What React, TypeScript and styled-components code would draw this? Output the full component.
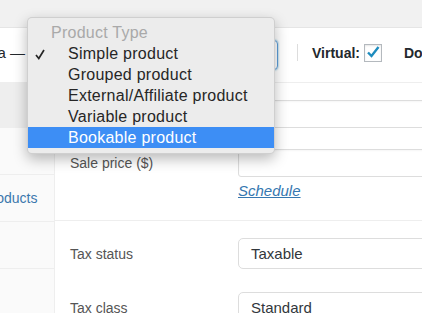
import React, { ReactElement } from 'react';
import styled, { createGlobalStyle } from 'styled-components';

interface TabProps {
  first?: boolean;
  active?: boolean;
}
interface MenuItemProps {
  selected?: boolean;
}

const tabs = ['General', 'Inventory', 'Linked Products', 'Attributes', 'Advanced'];
const productTypes = ['Simple product', 'Grouped product', 'External/Affiliate product', 'Variable product', 'Bookable product'];

const GlobalStyle = createGlobalStyle`
  body {
    margin: 0;
    background: #f1f1f1;
    font-family: "Liberation Sans", Arial, sans-serif;
  }
`;

const Page = styled.div`
  background: #f1f1f1;
  height: 313px;
  overflow: hidden;
  position: relative;
  width: 422px;
`;
const TopBand = styled.div`
  height: 27px;
`;
const Panel = styled.div`
  background: #fff;
  border-top: 1px solid #e5e5e5;
`;
const PanelHeader = styled.div`
  align-items: center;
  border-bottom: 1px solid #eee;
  box-sizing: border-box;
  display: flex;
  height: 55px;
  padding-bottom: 5px;
`;
const Title = styled.div`
  color: #23282d;
  display: flex;
  flex: 0 0 25px;
  font-size: 15px;
  justify-content: flex-end;
  min-width: 0;
  white-space: nowrap;
`;
const TitleText = styled.span`
  flex: none;
`;
const TypeSelect = styled.div`
  align-items: center;
  border: 1px solid #5b9dd9;
  border-radius: 4px;
  box-shadow: 0 0 2px rgba(30, 140, 190, 0.8);
  box-sizing: border-box;
  color: #32373c;
  display: flex;
  flex: none;
  font-size: 14px;
  height: 30px;
  justify-content: space-between;
  margin: 4px 0 0 10px;
  padding: 0 3px 0 8px;
  width: 243px;
`;
const Divider = styled.div`
  background: #ddd;
  flex: none;
  height: 17px;
  margin-left: 19px;
  width: 1px;
`;
const CheckLabel = styled.span<{ gap: number }>`
  color: #23282d;
  flex: none;
  font-size: 14px;
  font-weight: 700;
  margin-left: ${ p => p.gap }px;
  white-space: nowrap;
`;
const Checkbox = styled.div`
  background: #fff;
  border: 1px solid #b4b9be;
  box-shadow: inset 0 1px 2px rgba(0, 0, 0, 0.1);
  box-sizing: border-box;
  flex: none;
  height: 18px;
  margin-left: 4px;
  position: relative;
  width: 18px;
`;
const Body = styled.div`
  display: flex;
  height: 230px;
`;
const Tabs = styled.div`
  background: #fafafa;
  border-right: 1px solid #eee;
  box-sizing: border-box;
  flex: none;
  width: 55px;
`;
const Tab = styled.div<TabProps>`
  align-items: center;
  background: ${ p => p.active ? '#eee' : 'transparent' };
  border-bottom: 1px solid #eee;
  box-sizing: border-box;
  display: flex;
  height: ${ p => p.first ? 45 : 47 }px;
  justify-content: flex-end;
  padding-right: 12px;
`;
const TabLabel = styled.span`
  color: #3b78ad;
  flex: none;
  font-size: 14px;
  white-space: nowrap;
  width: 105px;
`;
const Content = styled.div`
  flex: 1;
`;
const Group = styled.div<{ top: number; bottom: number }>`
  border-bottom: 1px solid #eee;
  padding: ${ p => p.top }px 0 ${ p => p.bottom }px;
`;
const FieldRow = styled.div<{ gap?: number }>`
  align-items: center;
  display: flex;
  margin-top: ${ p => p.gap || 0 }px;
  padding-left: 15px;
`;
const Label = styled.label`
  color: #555;
  flex: none;
  font-size: 14px;
  width: 168px;
`;
const TextInput = styled.div<{ h: number }>`
  border: 1px solid #ddd;
  border-radius: 3px;
  box-shadow: inset 0 1px 2px rgba(0, 0, 0, 0.04);
  box-sizing: border-box;
  flex: none;
  height: ${ p => p.h }px;
  width: 220px;
`;
const SelectBox = styled.div`
  align-items: center;
  border: 1px solid #ddd;
  border-radius: 5px;
  box-sizing: border-box;
  color: #32373c;
  display: flex;
  flex: none;
  font-size: 15px;
  height: 31px;
  padding-left: 12px;
  width: 220px;
`;
const ScheduleLink = styled.a`
  color: #3577b0;
  font-size: 15px;
  font-style: italic;
  line-height: 20px;
  text-decoration: underline;
`;
const Menu = styled.div`
  background: #ececec;
  border: 1px solid rgba(0, 0, 0, 0.12);
  border-radius: 5px;
  box-shadow: 0 5px 14px rgba(0, 0, 0, 0.28);
  left: 27px;
  padding: 4px 0 5px;
  position: absolute;
  top: 17px;
  width: 246px;
`;
const MenuHeader = styled.div`
  color: #a9a9a9;
  font-size: 16px;
  height: 21px;
  letter-spacing: 0.25px;
  line-height: 21px;
  padding-left: 23px;
`;
const MenuItem = styled.div<MenuItemProps>`
  background: ${ p => p.selected ? '#3d8ef5' : 'transparent' };
  color: ${ p => p.selected ? '#fff' : '#262626' };
  font-size: 16px;
  height: 21px;
  letter-spacing: 0.25px;
  line-height: 21px;
  padding-left: 40px;
  position: relative;
  white-space: nowrap;
`;
const MenuCheck = styled.svg`
  left: 7px;
  position: absolute;
  top: 6px;
`;

function UpDownArrow(): ReactElement {
  return (
    <svg width="6" height="12" viewBox="0 0 6 12">
      <path d="M1 4.5 L3 2.5 L5 4.5 M1 7.5 L3 9.5 L5 7.5" fill="none" stroke="#b0b0b0" strokeWidth="1" />
    </svg>
  );
}

export default function App(): ReactElement {
  return (
    <Page>
      <GlobalStyle />
      <TopBand />
      <Panel>
        <PanelHeader>
          <Title><TitleText>Product data —</TitleText></Title>
          <TypeSelect>
            <span>Simple product</span>
            <UpDownArrow />
          </TypeSelect>
          <Divider />
          <CheckLabel gap={ 14 }>Virtual:</CheckLabel>
          <Checkbox>
            <svg width="18" height="18" viewBox="0 0 18 18" style={ { position: 'absolute', left: -1, top: -2 } }>
              <path d="M4 9.5 L7.5 13 L14.5 4" fill="none" stroke="#1e8cbe" strokeWidth="2.4" />
            </svg>
          </Checkbox>
          <CheckLabel gap={ 22 }>Downloadable:</CheckLabel>
        </PanelHeader>
        <Body>
          <Tabs>
            { tabs.map((t, i) => (
              <Tab key={ t } first={ i === 0 } active={ i === 0 }>
                <TabLabel>{ t }</TabLabel>
              </Tab>
            )) }
          </Tabs>
          <Content>
            <Group top={ 17 } bottom={ 19 }>
              <FieldRow>
                <Label>Regular price ($)</Label>
                <TextInput h={ 28 } />
              </FieldRow>
              <FieldRow gap={ 21 }>
                <Label>Sale price ($)</Label>
                <TextInput h={ 28 } />
              </FieldRow>
              <FieldRow gap={ 4 }>
                <Label />
                <ScheduleLink>Schedule</ScheduleLink>
              </FieldRow>
            </Group>
            <Group top={ 17 } bottom={ 0 }>
              <FieldRow>
                <Label>Tax status</Label>
                <SelectBox>Taxable</SelectBox>
              </FieldRow>
              <FieldRow gap={ 23 }>
                <Label>Tax class</Label>
                <SelectBox>Standard</SelectBox>
              </FieldRow>
            </Group>
          </Content>
        </Body>
      </Panel>
      <Menu>
        <MenuHeader>Product Type</MenuHeader>
        { productTypes.map((p, i) => (
          <MenuItem key={ p } selected={ i === 4 }>
            { i === 0 && (
              <MenuCheck width="10" height="11" viewBox="0 0 10 11">
                <path d="M1 6 L3.8 9.5 L9 1" fill="none" stroke="#262626" strokeWidth="1.7" />
              </MenuCheck>
            ) }
            { p }
          </MenuItem>
        )) }
      </Menu>
    </Page>
  );
}
